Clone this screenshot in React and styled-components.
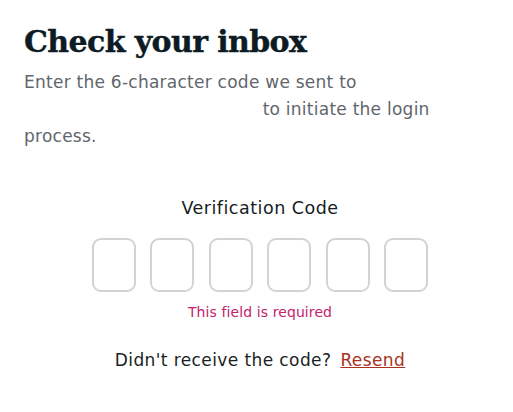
import styled, { createGlobalStyle } from 'styled-components';

const GlobalStyle = createGlobalStyle`
  body {
    margin: 0;
    background: #fff;
    font-family: "DejaVu Sans", sans-serif;
  }
`;

const Page = styled.div`
  width: 472px;
  padding: 24px 17px 0 24px;
`;

const Title = styled.h1`
  margin: 0;
  font-family: "DejaVu Serif", serif;
  font-weight: 700;
  font-size: 30px;
  line-height: 36px;
  color: #0d1b24;
  letter-spacing: -0.6px;
  -webkit-text-stroke: 0.4px #0d1b24;
`;

const Intro = styled.p`
  margin: 9px 0 0;
  width: 440px;
  font-size: 17px;
  line-height: 27px;
  letter-spacing: 0.25px;
  color: #5f666b;
`;

// the address is blanked out in the screenshot
const Hidden = styled.span`
  display: inline-block;
  width: 233px;
  height: 1em;
`;

const Form = styled.div`
  display: flex;
  flex-direction: column;
  align-items: center;
  margin-top: 48px;
`;

const Label = styled.div`
  font-size: 17.5px;
  letter-spacing: 0.5px;
  color: #141c22;
`;

const Boxes = styled.div`
  display: flex;
  gap: 14.5px;
  margin-top: 20px;
`;

const Box = styled.input`
  width: 44px;
  height: 54px;
  box-sizing: border-box;
  border: 2px solid #d3d3d5;
  border-radius: 9px;
  outline: none;
  background: #fff;
  text-align: center;
  font-size: 20px;
`;

const Error = styled.div`
  margin-top: 12px;
  font-size: 14px;
  letter-spacing: 0.1px;
  color: #c4226b;
`;

const Resend = styled.div`
  margin-top: 30px;
  font-size: 17px;
  letter-spacing: 0.4px;
  color: #1a1f24;
`;

const Link = styled.a`
  margin-left: 9px;
  color: #a8321e;
  text-decoration: underline;
  cursor: pointer;
`;

export default function App() {
  return (
    <>
      <GlobalStyle />
      <Page>
        <Title>Check your inbox</Title>
        <Intro>
          Enter the 6-character code we sent to <Hidden /> to initiate the login process.
        </Intro>
        <Form>
          <Label>Verification Code</Label>
          <Boxes>
            {[0, 1, 2, 3, 4, 5].map((i) => (
              <Box key={i} maxLength={1} />
            ))}
          </Boxes>
          <Error>This field is required</Error>
          <Resend>
            Didn't receive the code?<Link>Resend</Link>
          </Resend>
        </Form>
      </Page>
    </>
  );
}
